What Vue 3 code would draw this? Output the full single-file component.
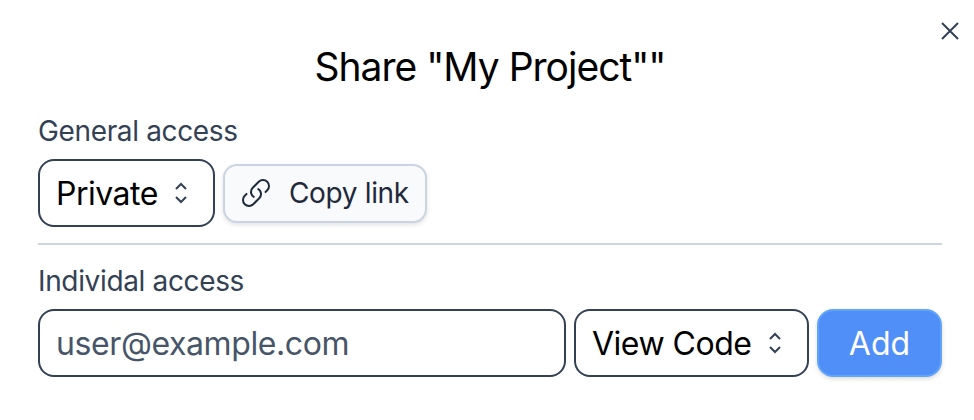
<template>
  <div class="dialog">
    <button class="close" aria-label="Close">
      <svg viewBox="0 0 24 24" class="close-icon"><path d="M6 18 18 6M6 6l12 12" /></svg>
    </button>
    <h1 class="title">Share "My Project""</h1>
    <label class="label first">General access</label>
    <div class="row general">
      <div class="select private">
        <span>Private</span>
        <svg viewBox="0 0 24 24" class="chev"><path d="M8.25 15 12 18.75 15.75 15m-7.5-6L12 5.25 15.75 9" /></svg>
      </div>
      <button class="copy">
        <svg viewBox="0 0 24 24" class="link"><path d="M13.19 8.688a4.5 4.5 0 0 1 1.242 7.244l-4.5 4.5a4.5 4.5 0 0 1-6.364-6.364l1.757-1.757m13.35-.622 1.757-1.757a4.5 4.5 0 0 0-6.364-6.364l-4.5 4.5a4.5 4.5 0 0 0 1.242 7.244" /></svg>
        <span>Copy link</span>
      </button>
    </div>
    <div class="divider"></div>
    <label class="label">Individal access</label>
    <div class="row individual">
      <div class="input">user@example.com</div>
      <div class="select role">
        <span>View Code</span>
        <svg viewBox="0 0 24 24" class="chev"><path d="M8.25 15 12 18.75 15.75 15m-7.5-6L12 5.25 15.75 9" /></svg>
      </div>
      <button class="add">Add</button>
    </div>
  </div>
</template>

<script setup>
</script>

<style>
html, body { margin: 0; background: #fff; }
</style>

<style scoped>
.dialog {
  position: relative;
  box-sizing: border-box;
  width: 974px;
  height: 420px;
  padding: 41px 32px 0 38px;
  background: #fff;
  font-family: Inter, "Noto Sans", sans-serif;
  color: #000;
}
.close {
  position: absolute;
  top: 15px;
  right: 8px;
  width: 32px;
  height: 32px;
  padding: 0;
  border: 0;
  background: none;
}
.close-icon { display: block; width: 32px; height: 32px; fill: none; stroke: #334155; stroke-width: 1.5; }
.title {
  margin: 0;
  font-size: 39px;
  line-height: 52px;
  font-weight: 400;
  text-align: center;
  letter-spacing: -1px;
}
.label {
  display: block;
  font-size: 28px;
  line-height: 36px;
  color: #334155;
  letter-spacing: -0.35px;
}
.first { margin-top: 20px; }
.row { display: flex; align-items: center; gap: 8px; }
.general { margin-top: 10px; }
.individual { margin-top: 10px; }
.select, .input {
  box-sizing: border-box;
  height: 68px;
  border: 2px solid #334155;
  border-radius: 16px;
  display: flex;
  align-items: center;
  font-size: 32px;
  background: #fff;
}
.select { padding: 0 16px; justify-content: space-between; letter-spacing: -0.5px; }
.private { width: 177px; }
.role { width: 235px; }
.chev { width: 32px; height: 32px; fill: none; stroke: #334155; stroke-width: 1.5; flex: none; }
.copy {
  box-sizing: border-box;
  width: 204px;
  height: 59px;
  display: flex;
  align-items: center;
  gap: 17px;
  padding: 0 15px;
  border: 2px solid #cbd5e1;
  border-radius: 14px;
  background: #f8fafc;
  box-shadow: 0 2px 4px rgba(15, 23, 42, 0.12);
  font: inherit;
  font-size: 28px;
  color: #1e293b;
  letter-spacing: -0.35px;
}
.link { width: 32px; height: 32px; fill: none; stroke: #1e293b; stroke-width: 1.5; flex: none; }
.divider { height: 2px; background: #cbd5e1; margin-top: 16px; margin-bottom: 18px; }
.input { flex: 1; padding: 0 16px; color: #475569; letter-spacing: -0.4px; }
.add {
  box-sizing: border-box;
  width: 125px;
  height: 68px;
  border: 2px solid #60a5fa;
  border-radius: 16px;
  background: #518ff8;
  box-shadow: 0 2px 4px rgba(15, 23, 42, 0.15);
  color: #fff;
  font: inherit;
  font-size: 32px;
}
</style>
